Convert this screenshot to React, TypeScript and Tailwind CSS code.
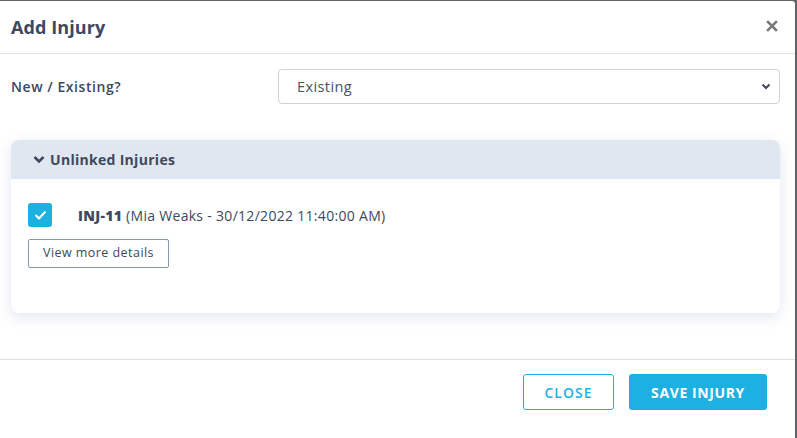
export default function App() {
  return (
    <div className="w-[797px] h-[438px] bg-[#5f6266] pt-px overflow-hidden font-['Open_Sans',sans-serif]">
      <div className="w-[795px] h-[437px] bg-white rounded-tr-[3px] flex flex-col">
        <div className="h-[53px] flex items-center justify-between pl-[11px] pr-[17px] border-b border-[#dee2e6]">
          <h1 className="text-[18px] font-bold text-[#3c4961] tracking-[0.1px]">Add Injury</h1>
          <svg width="12" height="12" viewBox="0 0 12 12" className="mt-[-2px]">
            <path d="M2 2 L10 10 M10 2 L2 10" stroke="#7a7a7a" strokeWidth="2.6" strokeLinecap="square" />
          </svg>
        </div>
        <div className="flex items-center pl-[11px] pr-[15px] pt-[15px]">
          <div className="w-[267px] text-[14px] font-semibold text-[#3c4961] tracking-[0.55px]">New / Existing?</div>
          <div className="flex-1 h-[35px] border border-[#ced4da] rounded-[4px] flex items-center justify-between pl-[18px] pr-[8px]">
            <span className="text-[14.5px] text-[#46536b] tracking-[0.4px]">Existing</span>
            <svg width="10" height="7" viewBox="0 0 10 7">
              <path d="M1.5 1.5 L5 5 L8.5 1.5" fill="none" stroke="#3c4961" strokeWidth="2" />
            </svg>
          </div>
        </div>
        <div className="ml-[11px] mr-[15px] mt-[36px] rounded-[8px] bg-white shadow-[0_4px_14px_rgba(150,165,200,0.28)] overflow-hidden">
          <div className="h-[39px] bg-[#e1e7f0] flex items-center pl-[22px] gap-[5px]">
            <svg width="12" height="9" viewBox="0 0 12 9">
              <path d="M1.5 2 L6 6.5 L10.5 2" fill="none" stroke="#3c4961" strokeWidth="2.6" />
            </svg>
            <span className="text-[14px] font-bold text-[#3c4961] tracking-[0.3px]">Unlinked Injuries</span>
          </div>
          <div className="px-[17px] pt-[24px] pb-[45px]">
            <div className="flex items-center gap-[26px]">
              <div className="w-[24px] h-[24px] rounded-[3px] bg-[#1db1e2] flex items-center justify-center">
                <svg width="13" height="10" viewBox="0 0 13 10">
                  <path d="M1.5 5 L5 8.5 L11.5 1.5" fill="none" stroke="white" strokeWidth="2" />
                </svg>
              </div>
              <span className="text-[14px] text-[#3c4961] tracking-[0.3px]">
                <b className="font-extrabold">INJ-11</b> (Mia Weaks - 30/12/2022 11:40:00 AM)
              </span>
            </div>
            <button className="mt-[12px] w-[141px] h-[29px] border border-[#8a96aa] rounded-[2px] text-[12.5px] text-[#3c4961] bg-white tracking-[0.45px]">
              View more details
            </button>
          </div>
        </div>
        <div className="mt-[46px] border-t border-[#dee2e6] flex justify-end gap-[15px] pt-[14px] pr-[28px]">
          <button className="w-[91px] h-[36px] border border-[#1db1e2] rounded-[3px] text-[14px] font-semibold text-[#1db1e2] bg-white tracking-[1px]">
            CLOSE
          </button>
          <button className="w-[138px] h-[36px] rounded-[3px] text-[14px] font-bold text-white bg-[#1db1e2] tracking-[0.6px]">
            SAVE INJURY
          </button>
        </div>
      </div>
    </div>
  );
}
